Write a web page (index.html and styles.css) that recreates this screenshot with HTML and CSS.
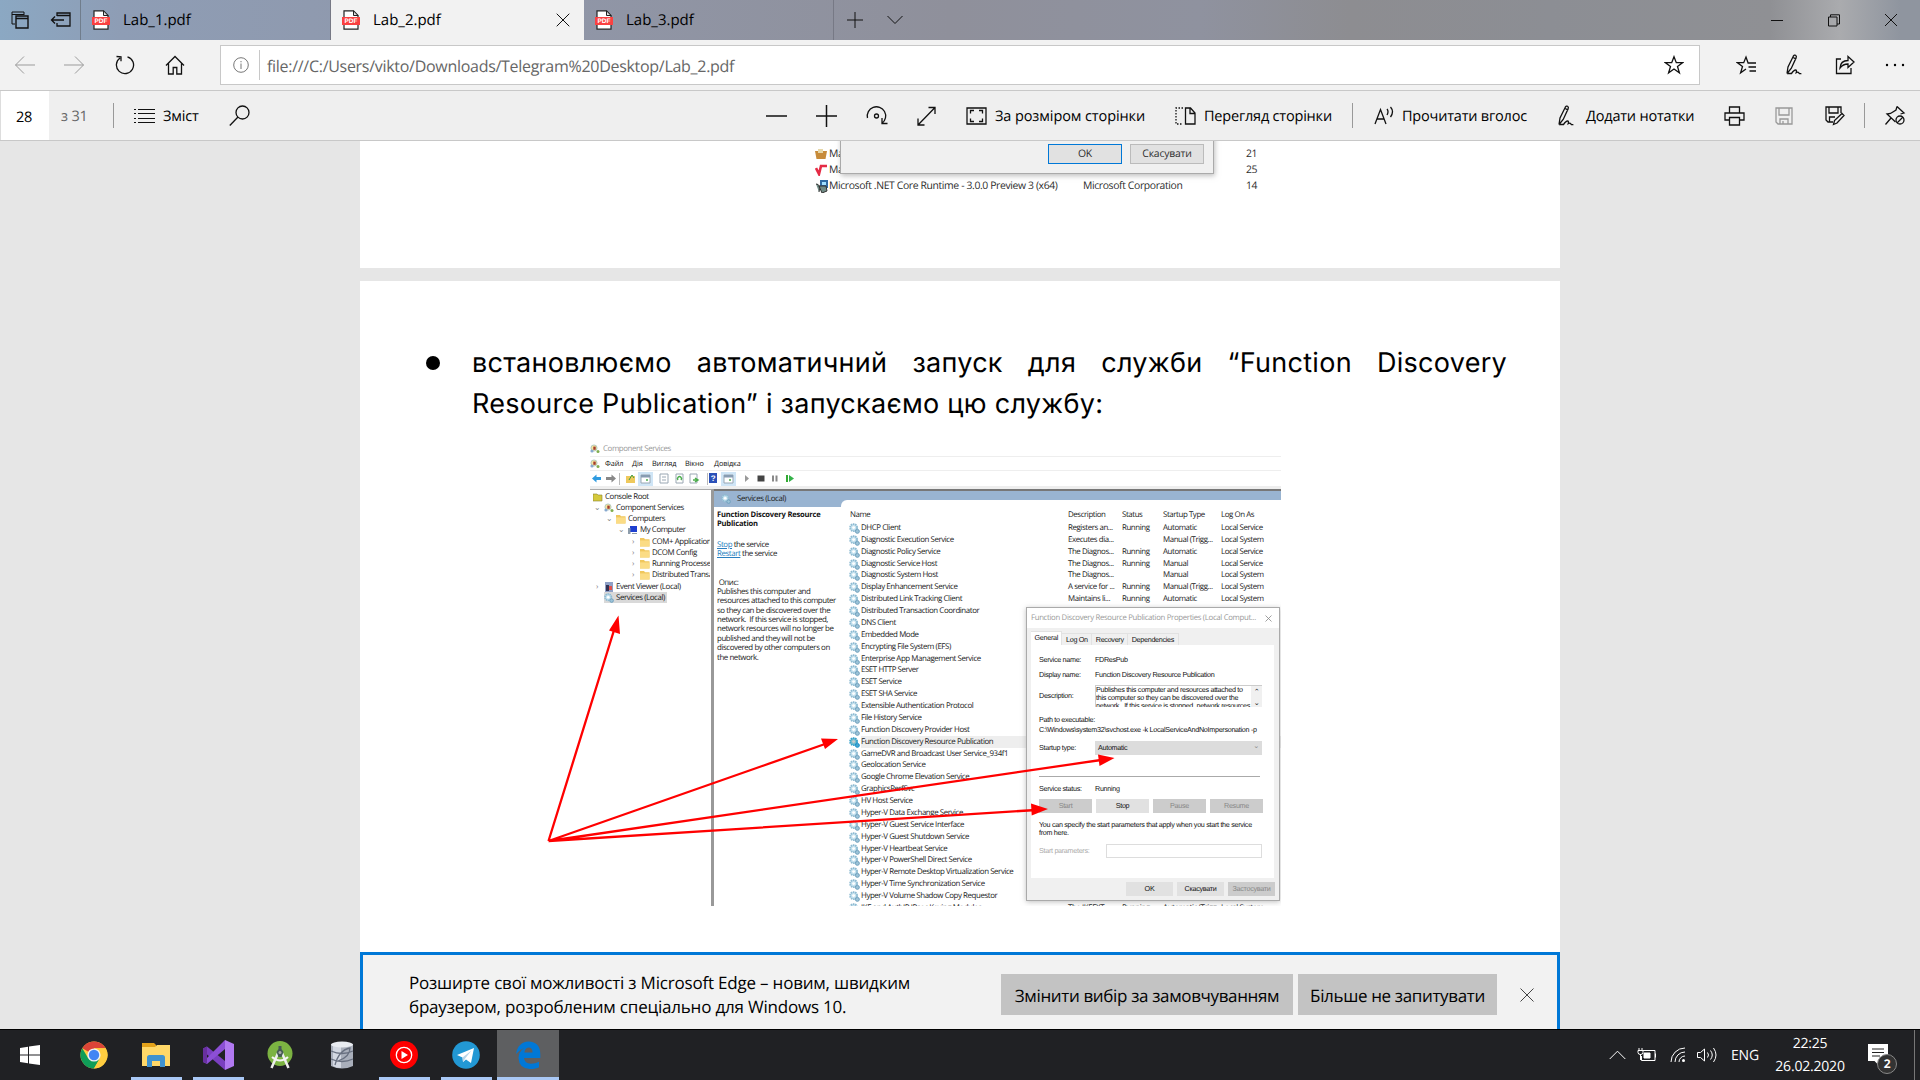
FILE: index.html
```html
<!DOCTYPE html>
<html lang="uk">
<head>
<meta charset="utf-8">
<title>Lab_2.pdf</title>
<link rel="stylesheet" href="styles.css">
</head>
<body>
<svg class="defs" aria-hidden="true">
  <symbol id="pdf" viewBox="0 0 18 20"><path d="M2 .8h9.5L16 5.5V19.2H2z" fill="#fff" stroke="#222" stroke-width="1.2"/><path d="M11.5.8v4.7H16z" fill="#ddd" stroke="#222"/><path d="M0 7h18v8H0z" fill="#fa4141"/><text x="9" y="13.2" text-anchor="middle" class="pdf-text">PDF</text></symbol>
  <symbol id="gear" viewBox="0 0 10 10"><circle cx="4.2" cy="4.2" r="3.2" fill="#c6e2ef" stroke="#8fbbd2" stroke-width="1.7" stroke-dasharray="1.4 .6"/><circle cx="7.6" cy="7.600" r="1.800" fill="#9cc3d8" stroke="#6d9fbc" stroke-width=".9"/><circle cx="4.2" cy="4.2" r="1.3" fill="#fff"/></symbol>
  <symbol id="folder" viewBox="0 0 10 10"><path d="M0 1h4l1 1.2h4.5V9.5H0z" fill="#f0c75d"/><path d="M0 3.4h9.5v6H0z" fill="#fbdc85"/></symbol>
  <symbol id="comp" viewBox="0 0 10 10"><circle cx="4" cy="4" r="3.1" fill="#f5e6a0" stroke="#9bb" stroke-width=".7"/><path d="M3.3 2.6h2.4v3.2H3.3z" fill="#a33c2e"/><circle cx="2" cy="7" r="1.6" fill="#88a9cf"/><circle cx="8" cy="7.5" r="1.5" fill="#7fae4e"/></symbol>
  <symbol id="pen" viewBox="0 0 20 22"><path d="M2 19.5 3 13 8.3 2.2q1-1.7 2.3-.9 1.3.9.5 2.6L6.2 14.5 2 19.5M8 3.5l3 1.4M2 19.5h4.5q2.5-3.5 4-3.5t.7 2.6q1.8-1 2.6.2t2.6.8"/></symbol>
  <symbol id="star" viewBox="0 0 20 20"><path d="m10 1.7 2.3 6h6.2l-5 3.8 1.9 6.3L10 14l-5.4 3.8 1.9-6.3-5-3.8h6.2z"/></symbol>
</svg>
<div class="window">
  <header class="tabs">
    <div class="tab-tools">
      <svg class="ic" width="20" height="20" viewBox="0 0 20 20"><path d="M5 14H2V2h12v3M2 4.5h12"/><path d="M6 6h12v12H6zM6 8.5h12" stroke-width="1.4"/></svg>
      <svg class="ic" width="22" height="18" viewBox="0 0 22 18"><path d="M7 5V2h13v13H7v-3M7 4.5h13" stroke-width="1.3"/><path d="M14 9H1.5M5 5.5 1.5 9 5 12.5" stroke-width="1.3"/></svg>
    </div>
    <div class="tab"><svg width="18" height="20"><use href="#pdf"/></svg><span>Lab_1.pdf</span></div>
    <div class="tab active"><svg width="18" height="20"><use href="#pdf"/></svg><span>Lab_2.pdf</span><svg class="ic tab-close" width="14" height="14"><path d="m.7.7 12.6 12.6M13.3.7.7 13.3"/></svg></div>
    <div class="tab"><svg width="18" height="20"><use href="#pdf"/></svg><span>Lab_3.pdf</span></div>
    <svg class="ic new-tab" width="16" height="16"><path d="M8 0v16M0 8h16"/></svg>
    <svg class="ic" width="16" height="10"><path d="m.5 1 7.5 7.500L15.500 1"/></svg>
    <div class="controls">
      <svg class="ic" width="12" height="12"><path d="M0 6.500h12"/></svg>
      <svg class="ic" width="12" height="13"><path d="M.5 3h8.500v9H.5zM2.500 3V.8h9V10H9"/></svg>
      <svg class="ic" width="12" height="12"><path d="m0 0 12 12M12 0 0 12"/></svg>
    </div>
  </header>

  <nav class="nav">
    <svg class="ic off" width="22" height="20"><path d="M21 10H1.500M10 1.500 1.500 10l8.500 8.500"/></svg>
    <svg class="ic off" width="22" height="20"><path d="M0 10h19.500M11 1.500l8.500 8.500-8.500 8.500"/></svg>
    <svg class="ic bold" width="20" height="20"><path d="M12.500 1.800A8.600 8.600 0 1 1 5 3M1.500 1.500 6 1.800v4.500"/></svg>
    <svg class="ic bold" width="20" height="20"><path d="m1 10.500 9-9 9 9M3.500 8.500V19h4.700v-6.500h3.600V19h4.700V8.500"/></svg>
    <div class="address">
      <svg class="ic info" width="16" height="16"><circle cx="8" cy="8" r="7.300"/><path d="M8 6.500V12M8 4v1.300"/></svg>
      <span class="url">file:///C:/Users/vikto/Downloads/Telegram%20Desktop/Lab_2.pdf</span>
      <svg class="ic bold" width="20" height="20"><use href="#star"/></svg>
    </div>
    <svg class="ic bold" width="20" height="20"><path d="M12 7.800 10 2 7.700 7.700H1.500l5 3.800-1.900 6.300L10 14M11.500 8H20M12.500 12H20M13.500 16H20"/></svg>
    <svg class="ic bold" width="20" height="22"><use href="#pen"/></svg>
    <svg class="ic bold" width="20" height="20"><path d="M6 4H1.500v14.500H16V13M5 13q.5-7.500 8-7.500V1.500L19 7l-6 5.500V9q-5 0-8 4z"/></svg>
    <svg width="20" height="20"><circle cx="2" cy="10" r="1.200"/><circle cx="10" cy="10" r="1.200"/><circle cx="18" cy="10" r="1.200"/></svg>
  </nav>

  <div class="toolbar">
    <span class="page-no">28</span>
    <span class="of">з 31</span>
    <i class="sep"></i>
    <svg class="ic" width="21" height="16"><path d="M4 1.500h17M4 5.500h17M4 10.500h17M4 14.500h17M0 1.500h2M0 5.500h2M0 10.500h2M0 14.500h2"/></svg>
    <span class="t-toc">Зміст</span>
    <svg class="ic bold" width="21" height="22"><circle cx="13.500" cy="7.500" r="6.500"/><path d="M9 12 .8 20.500"/></svg>
    <svg class="ic" width="21" height="22"><path d="M0 11h21" stroke-width="1.500"/></svg>
    <svg class="ic" width="21" height="22"><path d="M0 11h21M10.500 0v22" stroke-width="1.500"/></svg>
    <svg class="ic bold" width="22" height="22"><path d="M1.500 13A9.200 9.200 0 1 1 16 18.300M16 13v5.500h5.500"/><circle cx="10.500" cy="11" r="2"/></svg>
    <svg class="ic bold" width="19" height="22"><path d="M1 20 18 2.500M11.500 2.500H18V9M1 13.500V20h6.500"/></svg>
    <svg class="ic bold" width="21" height="18"><path d="M1 1h19v16H1zM4.500 6.500v-3H8M13 3.500h3.500v3M4.500 11.500v3H8M13 14.500h3.500v-3"/></svg>
    <span class="t-fit">За розміром сторінки</span>
    <svg class="ic bold" width="21" height="18"><path d="M10.500 1h5L20 6v11h-9.500zM15 1v5.500h5"/><path d="M8 1H1v16h7" stroke-dasharray="1.500 1.500"/></svg>
    <span class="t-view">Перегляд сторінки</span>
    <i class="sep"></i>
    <svg class="ic bold" width="21" height="20"><path d="M1 18 6.500 3.500 12 18M3 13h7M13 3q2 2.500 0 6M16.500 1q4 4.500 0 10"/></svg>
    <span class="t-read">Прочитати вголос</span>
    <svg class="ic bold" width="20" height="22"><use href="#pen"/></svg>
    <span class="t-note">Додати нотатки</span>
    <svg class="ic bold" width="21" height="20"><path d="M5.500 7V1h10v6M5 14H1V7h19v7h-4M5.500 11.500h10V19h-10z"/></svg>
    <svg class="ic bold gray" width="18" height="18"><path d="M1 1h16v16H3L1 15zM4 1v7h10V1M5 17v-5h8v5M8 14v3"/></svg>
    <svg class="ic bold" width="20" height="20"><path d="M8 16H3l-2-2V1h15v6M4 1v6h9V1M4.500 16v-5H10M8.500 18.500l1-4 7.500-7 2 2-7 7.500z"/></svg>
    <i class="sep"></i>
    <svg class="ic bold" width="21" height="21"><path d="m12 1.500 7 6.500-3.500 1M12 1.500 11 5 5.500 8.500 2 9l8.500 8M6 13l-5.500 6.500"/><circle cx="15" cy="15" r="4"/><path d="m12 18 6-6"/></svg>
  </div>

  <main class="viewer">
    <section class="sheet first">
      <div class="shot-a">
        <div class="prog-row"><svg width="12" height="12"><path d="M0 3h12l-1.500 8h-9z" fill="#c78b3a"/><path d="M3 1h5v4H3z" fill="#e6d7a8"/></svg><span>Ma</span><b></b><span>21</span></div>
        <div class="prog-row"><svg width="12" height="12"><path d="m1 4 3 6L6 2h6" fill="none" stroke="#e52b45" stroke-width="2.600"/></svg><span>Ma</span><b></b><span>25</span></div>
        <div class="prog-row"><svg width="13" height="13"><path d="M5 0h8v8H5z" fill="#2e6ba3"/><path d="M7 2h4v3H7z" fill="#9fe0ff"/><path d="M1 4q5 0 3 8M4 6h7l1 5-5 2z" fill="#6f8b85" stroke="#333"/></svg><span>Microsoft .NET Core Runtime - 3.0.0 Preview 3 (x64)</span><span>Microsoft Corporation</span><span>14</span></div>
        <div class="prog-row cut"><svg width="13" height="12"><path d="M5 1h8v8H5z" fill="#2e6ba3"/></svg></div>
        <div class="dlg-a"><span class="primary">OK</span><span>Скасувати</span></div>
      </div>
    </section>

    <section class="sheet second">
      <div class="bullet">
        <i class="dot"></i>
        <p><span class="just">встановлюємо автоматичний запуск для служби “Function Discovery</span><span class="last">Resource Publication” і запускаємо цю службу:</span></p>
      </div>
      <div class="shot-b">
        <div class="cs-title"><svg width="10" height="10"><use href="#comp"/></svg><span>Component Services</span></div>
        <div class="cs-menu"><svg width="10" height="10"><use href="#comp"/></svg><span>Файл</span><span>Дія</span><span>Вигляд</span><span>Вікно</span><span>Довідка</span></div>
        <div class="cs-tools">
          <svg width="210" height="15"><path d="M2 7.500 6.500 3.500V6H11v3H6.500v2.500z" fill="#2f9be0"/><path d="M26 7.500 21.500 3.500V6H16v3h5.500v2.500z" fill="#888"/><path d="M29.500 2v12M117.500 2v12" stroke="#bbb"/><path d="M48 1h15v14H48zM131 1h15v14h-15z" fill="#cfe5f6"/><path d="M36 5h9v7h-9z" fill="#efc95c"/><path d="m39 9 3-5 2 3" fill="none" stroke="#3f9c3f"/><path d="M51 4h9v8h-9zM134 4h9v8h-9zM70 3h8v9h-8zM86 3h7v9h-7zM100 3h7v9h-7z" fill="#fff" stroke="#9aa7b3"/><path d="M51 4h9v2.500h-9zM134 4h9v2.500h-9z" fill="#879cb2"/><path d="M56 9h2M139 9h2M88 9a2 2 0 1 1 3 0M103 9h5M105 7l3 2-3 2" fill="none" stroke="#4cae4c" stroke-width="1.500"/><path d="M72 6h4M72 9h4" stroke="#9aa7b3"/><path d="M119 2h8v10h-8z" fill="#2b50b8"/><text x="123" y="10" class="q">?</text><path d="m155 4 4 3.500-4 3.500z" fill="#999"/><path d="M167.500 4.500h7v6h-7z" fill="#444"/><path d="M183 4.500v6M186.500 4.500v6" stroke="#888" stroke-width="2"/><path d="M197 4v7" stroke="#3a3" stroke-width="2"/><path d="m199 4 5 3.500-5 3.500z" fill="#35b24a"/></svg>
        </div>
        <div class="cs-body">
          <div class="tree">
            <div class="node"><svg width="10" height="10"><path d="M0 2h4l1 1h4v6H0z" fill="#d5c93c" stroke="#8a8530" stroke-width=".6"/></svg><span>Console Root</span></div>
            <div class="node l1"><em>⌄</em><svg width="10" height="10"><use href="#comp"/></svg><span>Component Services</span></div>
            <div class="node l2"><em>⌄</em><svg width="10" height="10"><use href="#folder"/></svg><span>Computers</span></div>
            <div class="node l3"><em>⌄</em><svg width="10" height="10"><path d="M2 1h7v6H2z" fill="#1d3fd0"/><path d="M0 3h2.500v6H0zM4 8h5v1H4z" fill="#8d9cab"/></svg><span>My Computer</span></div>
            <div class="node l4"><em>›</em><svg width="10" height="10"><use href="#folder"/></svg><span>COM+ Applications</span></div>
            <div class="node l4"><em>›</em><svg width="10" height="10"><use href="#folder"/></svg><span>DCOM Config</span></div>
            <div class="node l4"><em>›</em><svg width="10" height="10"><use href="#folder"/></svg><span>Running Processes</span></div>
            <div class="node l4"><em>›</em><svg width="10" height="10"><use href="#folder"/></svg><span>Distributed Transaction</span></div>
            <div class="node l1"><em>›</em><svg width="10" height="10"><path d="M1 0h8v10H1z" fill="#8fa0c6"/><path d="M2 3h3v6H2z" fill="#335"/><path d="M5 4h3v4H5z" fill="#e0534d"/></svg><span>Event Viewer (Local)</span></div>
            <div class="node l1"><em></em><div class="sel"><svg width="10" height="10"><use href="#gear"/></svg><span>Services (Local)</span></div></div>
          </div>
          <div class="pane">
            <div class="pane-head"><svg width="10" height="10"><use href="#gear"/></svg><span>Services (Local)</span></div>
            <div class="detail">
              <strong>Function Discovery Resource<br>Publication</strong>
              <p class="links"><u>Stop</u> the service<br><u>Restart</u> the service</p>
              <p class="desc">&nbsp;Опис:<br>Publishes this computer and<br>resources attached to this computer<br>so they can be discovered over the<br>network.&nbsp; If this service is stopped,<br>network resources will no longer be<br>published and they will not be<br>discovered by other computers on<br>the network.</p>
            </div>
            <div class="list">
              <div class="row head"><span>Name</span><span>Description</span><span>Status</span><span>Startup Type</span><span>Log On As</span></div>
              <div class="row"><svg><use href="#gear"/></svg><span>DHCP Client</span><span>Registers an...</span><span>Running</span><span>Automatic</span><span>Local Service</span></div>
              <div class="row"><svg><use href="#gear"/></svg><span>Diagnostic Execution Service</span><span>Executes dia...</span><span></span><span>Manual (Trigg...</span><span>Local System</span></div>
              <div class="row"><svg><use href="#gear"/></svg><span>Diagnostic Policy Service</span><span>The Diagnos...</span><span>Running</span><span>Automatic</span><span>Local Service</span></div>
              <div class="row"><svg><use href="#gear"/></svg><span>Diagnostic Service Host</span><span>The Diagnos...</span><span>Running</span><span>Manual</span><span>Local Service</span></div>
              <div class="row"><svg><use href="#gear"/></svg><span>Diagnostic System Host</span><span>The Diagnos...</span><span></span><span>Manual</span><span>Local System</span></div>
              <div class="row"><svg><use href="#gear"/></svg><span>Display Enhancement Service</span><span>A service for ...</span><span>Running</span><span>Manual (Trigg...</span><span>Local System</span></div>
              <div class="row"><svg><use href="#gear"/></svg><span>Distributed Link Tracking Client</span><span>Maintains li...</span><span>Running</span><span>Automatic</span><span>Local System</span></div>
              <div class="row"><svg><use href="#gear"/></svg><span>Distributed Transaction Coordinator</span><span>Coordinates ...</span><span>Running</span><span>Manual</span><span>Network S...</span></div>
              <div class="row"><svg><use href="#gear"/></svg><span>DNS Client</span></div>
              <div class="row"><svg><use href="#gear"/></svg><span>Embedded Mode</span></div>
              <div class="row"><svg><use href="#gear"/></svg><span>Encrypting File System (EFS)</span></div>
              <div class="row"><svg><use href="#gear"/></svg><span>Enterprise App Management Service</span></div>
              <div class="row"><svg><use href="#gear"/></svg><span>ESET HTTP Server</span></div>
              <div class="row"><svg><use href="#gear"/></svg><span>ESET Service</span></div>
              <div class="row"><svg><use href="#gear"/></svg><span>ESET SHA Service</span></div>
              <div class="row"><svg><use href="#gear"/></svg><span>Extensible Authentication Protocol</span></div>
              <div class="row"><svg><use href="#gear"/></svg><span>File History Service</span></div>
              <div class="row"><svg><use href="#gear"/></svg><span>Function Discovery Provider Host</span></div>
              <div class="row picked"><svg><use href="#gear"/></svg><span>Function Discovery Resource Publication</span></div>
              <div class="row"><svg><use href="#gear"/></svg><span>GameDVR and Broadcast User Service_934f1</span></div>
              <div class="row"><svg><use href="#gear"/></svg><span>Geolocation Service</span></div>
              <div class="row"><svg><use href="#gear"/></svg><span>Google Chrome Elevation Service</span></div>
              <div class="row"><svg><use href="#gear"/></svg><span>GraphicsPerfSvc</span></div>
              <div class="row"><svg><use href="#gear"/></svg><span>HV Host Service</span></div>
              <div class="row"><svg><use href="#gear"/></svg><span>Hyper-V Data Exchange Service</span></div>
              <div class="row"><svg><use href="#gear"/></svg><span>Hyper-V Guest Service Interface</span></div>
              <div class="row"><svg><use href="#gear"/></svg><span>Hyper-V Guest Shutdown Service</span></div>
              <div class="row"><svg><use href="#gear"/></svg><span>Hyper-V Heartbeat Service</span></div>
              <div class="row"><svg><use href="#gear"/></svg><span>Hyper-V PowerShell Direct Service</span></div>
              <div class="row"><svg><use href="#gear"/></svg><span>Hyper-V Remote Desktop Virtualization Service</span></div>
              <div class="row"><svg><use href="#gear"/></svg><span>Hyper-V Time Synchronization Service</span></div>
              <div class="row"><svg><use href="#gear"/></svg><span>Hyper-V Volume Shadow Copy Requestor</span></div>
              <div class="row"><svg><use href="#gear"/></svg><span>IKE and AuthIP IPsec Keying Modules</span><span>The IKEEXT ...</span><span>Running</span><span>Automatic (Trigg...</span><span>Local System</span></div>
            </div>
          </div>
        </div>
        <div class="props">
          <div class="props-title"><span>Function Discovery Resource Publication Properties (Local Comput...</span><svg width="7" height="7"><path d="m.5.5 6 6M6.500.5l-6 6" stroke="#888" stroke-width=".8"/></svg></div>
          <div class="props-tabs"><span class="on">General</span><span>Log On</span><span>Recovery</span><span>Dependencies</span></div>
          <div class="props-panel">
            <div class="f f1"><label>Service name:</label><span>FDResPub</span></div>
            <div class="f f2"><label>Display name:</label><span>Function Discovery Resource Publication</span></div>
            <div class="f f3"><label>Description:</label><div class="area"><span>Publishes this computer and resources attached to<br>this computer so they can be discovered over the<br>network.&nbsp; If this service is stopped, network resources</span><em>⌃<br>⌄</em></div></div>
            <div class="path">Path to executable:<br>C:\Windows\system32\svchost.exe -k LocalServiceAndNoImpersonation -p</div>
            <div class="f f4"><label>Startup type:</label><div class="combo"><span>Automatic</span><em>⌄</em></div></div>
            <div class="f f5"><label>Service status:</label><span>Running</span></div>
            <div class="acts"><span>Start</span><span class="en">Stop</span><span>Pause</span><span>Resume</span></div>
            <div class="hint">You can specify the start parameters that apply when you start the service<br>from here.</div>
            <div class="params"><label>Start parameters:</label><i></i></div>
          </div>
          <div class="props-foot"><span>OK</span><span>Скасувати</span><span class="dis">Застосувати</span></div>
        </div>
      </div>
      <svg class="arrows" width="700" height="260" viewBox="540 600 700 260">
        <path d="M548.500 841 615 627M548.500 841 825 744M548.500 841 1101 760M548.500 841 1036 810" stroke="#f00" stroke-width="2.300" fill="none"/>
        <path d="M618.500 615.500 609 630.500l11 3.500zM838 739l-17-.5 4 10.500zM1114.500 758l-16.500-3.500 1.500 11.500zM1048 809l-17-5.500.7 12z" fill="#f00"/>
      </svg>
    </section>

    <aside class="banner">
      <p>Розширте свої можливості з Microsoft Edge – новим, швидким<br>браузером, розробленим спеціально для Windows 10.</p>
      <span class="btn b1">Змінити вибір за замовчуванням</span>
      <span class="btn b2">Більше не запитувати</span>
      <svg class="ic" width="14" height="14"><path d="m.5.5 13 13M13.500.5l-13 13" stroke="#444"/></svg>
    </aside>
  </main>

  <footer class="taskbar">
    <div class="app"><svg width="20" height="20"><path d="M0 3 8 1.700V9.500H0zM9 1.500 20 0v9.500H9zM0 10.500h8v7.800L0 17zM9 10.500h11V20L9 18.500z" fill="#fff"/></svg></div>
    <div class="app"><svg width="28" height="28" viewBox="0 0 28 28"><circle cx="14" cy="14" r="13.500" fill="#ffcd40"/><path d="M14 14 2.300 7.250A13.500 13.500 0 0 1 25.700 7.250H14z" fill="#db4437"/><path d="M2.300 7.250A13.500 13.500 0 0 0 14 27.500L19.800 17.500 14 14 8.200 17.300z" fill="#0f9d58"/><path d="M14 7.250h11.700A13.500 13.500 0 0 1 14 27.500L19.850 17.400z" fill="#ffcd40"/><circle cx="14" cy="14" r="6.600" fill="#f1f1f1"/><circle cx="14" cy="14" r="5.200" fill="#4285f4"/></svg></div>
    <div class="app run"><svg width="28" height="28" viewBox="0 0 28 28"><path d="M0 2h12l2 2v3H0z" fill="#e3a21a"/><path d="M0 6h13l2-2h13v21H0z" fill="#ffd868"/><path d="M5 26V16.500q0-2.500 2.500-2.500h13q2.500 0 2.500 2.500V26h-5v-6h-8v6z" fill="#3f92cf"/></svg></div>
    <div class="app run"><svg width="31" height="30" viewBox="0 0 31 30"><path d="M22 0 31 4v22l-9 4z" fill="#b179f1"/><path d="M0 8.500 4 6.500 22 21v9L0 11z" fill="#7a3fc0"/><path d="M22 0v9L4 24 0 22z" fill="#8c4fd6"/><path d="M0 8.500 4 6.500v17L0 22z" fill="#68309f"/></svg></div>
    <div class="app"><svg width="26" height="28" viewBox="0 0 26 28"><circle cx="13" cy="12.500" r="12.500" fill="#7cb342"/><path d="M11.500 11 4.500 27M14.500 11l7 16" stroke="#eee" stroke-width="2.500"/><path d="M5 16q8 7 16 0" fill="none" stroke="#f5f5f5" stroke-width="2"/><path d="M11.500 5h3v3l2 3-2 5h-3l-2-5 2-3z" fill="#455a55"/><circle cx="13" cy="11.500" r="1.500" fill="#aaa"/></svg></div>
    <div class="app"><svg width="24" height="28" viewBox="0 0 24 28"><path d="M1 3v22q11 5 22 0V3" fill="#a9afbb"/><path d="M3 3v22q3 2 8 2V4z" fill="#d3d8e2"/><ellipse cx="12" cy="3.500" rx="11" ry="3" fill="#e9ecf1"/><path d="M1 10q11 5 22 0M1 18q11 5 22 0M5 24Q9 9 20 7q0 9-12 13" fill="none" stroke="#687080" stroke-width="1.300"/></svg></div>
    <div class="app run"><svg width="28" height="28"><circle cx="14" cy="14" r="14" fill="#f00"/><circle cx="14" cy="14" r="7.700" fill="none" stroke="#fff" stroke-width="1.300"/><path d="m11.500 10 6.500 4-6.500 4z" fill="#fff"/></svg></div>
    <div class="app run"><svg width="28" height="28"><circle cx="14" cy="14" r="13.800" fill="#2298d4"/><path d="m5 14 17-7-3 15-5-3.500-3 2.500-.5-4.500z" fill="#fff"/><path d="m10.500 16.500 9-7-6 7.500-2.500 4z" fill="#b8d5e8"/></svg></div>
    <div class="app run current"><svg width="26" height="28" viewBox="0 0 26 28"><path d="M1 13Q3 1 13.500 0.500 25 .8 25.300 13v4H9q.4 5.500 7 5.700 4.500 0 8-2v5.500Q21 28 15 28 4 27.500 3.500 17 3.600 11 9 7 4.500 8.500 1 13M9.300 11.500h8.200Q17.500 6.500 13.500 6.500q-3.500.3-4.200 5z" fill="#0078d7" fill-rule="evenodd"/></svg></div>
    <div class="tray">
      <svg class="ic w" width="17" height="10"><path d="m.7 9 7.800-7.800L16.300 9"/></svg>
      <svg class="ic w" width="20" height="14"><path d="M6 2.500h12v10H4.500V8M18.500 5.500v4"/><path d="M7 5h6v5H7z" fill="#fff"/><path d="M1 2.500h5v2q0 2-2.500 2T1 4.500zM2 0v2M5 0v2M3.500 6v6"/></svg>
      <svg class="ic w" width="16" height="16"><path d="M1 15A14 14 0 0 1 15 1M5 15A10 10 0 0 1 15 5M9 15a6 6 0 0 1 6-6"/><circle cx="13.500" cy="13.500" r="1.500" fill="#fff" stroke="none"/></svg>
      <svg class="ic w" width="21" height="16"><path d="M.5 5.500h3L7.500 2v12l-4-3.500h-3zM10.500 5.500q2 2.500 0 5M13.500 3.500q3.500 4.500 0 9M16.500 1q5 7 0 14"/></svg>
      <span class="lang">ENG</span>
      <span class="clock">22:25<br>26.02.2020</span>
      <div class="notif"><svg width="20" height="22"><path d="M0 0h20v17h-9v4.500L6.500 17H0z" fill="#fff"/><path d="M4 5h12M4 8.500h12M4 12h8" stroke="#222"/></svg><b>2</b></div>
      <i class="peek"></i>
    </div>
  </footer>
</div>
</body>
</html>
```

FILE: styles.css
```css
* { box-sizing: border-box; }
body { margin: 0; font-family: "Open Sans", "Noto Sans", sans-serif; color: #000; background: #e6e6e6; overflow: hidden; text-rendering: geometricPrecision; }
p { margin: 0; }
svg { display: block; flex: none; }
i, em { font-style: normal; }
.defs { position: absolute; width: 0; height: 0; }
.ic { fill: none; stroke: #111; stroke-width: 1; }
.bold { stroke-width: 1.3; }
.off { stroke: #9b9b9b; }
.gray { stroke: #999; }
.w { stroke: #fff; }
.pdf-text { font: bold 6.5px "Liberation Sans", sans-serif; fill: #fff; }
.window { width: 1920px; height: 1080px; display: grid; grid-template-rows: 40px 51px 50px 889px 50px; }

.tabs { display: flex; align-items: center; background: linear-gradient(90deg, #8ba8c3 0, #8e9db5 120px, #9097a9 500px, #8f909b 950px, #8f929f 1200px, #8d8d91 1350px, #8c8e94 1550px, #8f9094 1770px, #aaabae 1840px, #8f959f 1900px); }
.tab-tools { width: 81px; height: 40px; display: flex; align-items: center; padding-left: 10px; gap: 20px; border-right: 1px solid #707d8c; }
.tab { width: 250px; height: 40px; display: flex; align-items: center; padding-left: 11px; gap: 13px; border-right: 1px solid #777985; font-size: 15px; letter-spacing: 0; }
.tab.active { width: 253px; background: #f2f2f2; border: 0; }
.tab-close { margin-left: auto; margin-right: 14px; }
.new-tab { margin: 0 24px 0 13px; }
.controls { display: flex; align-items: center; gap: 45px; margin-left: auto; padding-right: 23px; }

.nav { display: grid; grid-template-columns: 50px 51px 50px 55px 1516px 49px 50px 50px 1fr; align-items: center; padding: 0 0 1px 14px; background: #f2f2f2; border-bottom: 1px solid #c8c8c8; }
.address { width: 1480px; height: 40px; background: #fff; border: 1px solid #c8c8c8; display: flex; align-items: center; padding: 0 15px 0 12px; }
.info { stroke: #777; }
.url { flex: 1; height: 30px; margin-left: 10px; padding-left: 7px; border-left: 1px solid #c8c8c8; font-size: 16px; line-height: 32px; color: #666; letter-spacing: -.29px; }

.toolbar { display: grid; align-items: center; grid-template-columns: 61px 52px 21px 29px 66px 537px 50px 50px 51px 49px 29px 180px 29px 148px 22px 28px 155px 29px 138px 51px 50px 39px 21px 1fr; background: #efefef; border-bottom: 1px solid #c8c8c8; font-size: 14.5px; letter-spacing: -.2px; white-space: nowrap; }
.page-no { width: 49px; height: 49px; background: #fff; text-align: center; line-height: 54px; padding-right: 2px; border-left: 1px solid #ddd; }
.of, .t-toc, .t-fit, .t-view, .t-read, .t-note { padding-top: 2px; }
.of { color: #666; }
.sep { width: 1px; height: 25px; background: #999; }
.t-fit { letter-spacing: -.1px; }

.viewer { position: relative; overflow: hidden; background: #e6e6e6; border-bottom: 1px solid #000; display: flex; flex-direction: column; align-items: center; gap: 13px; }
.sheet { width: 1200px; background: #fff; flex: none; }
.first { height: 127px; }
.second { height: 900px; position: relative; }

.shot-a { position: relative; width: 447px; height: 57px; margin-left: 455px; overflow: hidden; font-size: 10.400px; letter-spacing: -.37px; color: #2c2c2c; padding-top: 5px; }
.prog-row { display: grid; grid-template-columns: 14px 254px 163px 1fr; align-items: center; height: 16.2px; white-space: nowrap; }
.dlg-a { position: absolute; left: 25px; top: -10px; width: 374px; height: 43px; background: #f0f0f0; border: 1px solid #aaa; box-shadow: 1px 2px 5px #8888; display: flex; justify-content: flex-end; align-items: flex-end; gap: 8px; padding: 0 9px 9px; }
.dlg-a span { width: 74px; height: 20px; background: #e1e1e1; border: 1px solid #bbb; text-align: center; line-height: 19px; letter-spacing: -.2px; }
.dlg-a .primary { border: 1.5px solid #0078d7; }

.bullet { display: flex; padding: 61px 0 0 66px; }
.dot { width: 14px; height: 14px; border-radius: 50%; background: #000; margin: 14px 32px 0 0; }
.bullet p { width: 1035px; font: 400 27px/41px "Inter", "Roboto", sans-serif; letter-spacing: .28px; }
.just, .last { display: block; white-space: nowrap; }
.just { text-align-last: justify; }

.shot-b { position: relative; width: 691px; height: 467px; margin: 15px 0 0 230px; overflow: hidden; font-size: 7.900px; letter-spacing: -.42px; color: #222; white-space: nowrap; }
.cs-title, .cs-menu { display: flex; align-items: center; border-bottom: 1px solid #eee; }
.cs-title { height: 18px; gap: 3px; color: #999; padding-top: 3px; }
.cs-menu { display: grid; grid-template-columns: 15px 27px 20px 33px 29px 1fr; height: 14px; padding-top: 1px; font-size: 7.300px; letter-spacing: -.1px; color: #111; }
.cs-tools { height: 19px; border-bottom: 4px solid #eee; }
.q { font: bold 8px "Liberation Sans", sans-serif; fill: #fff; text-anchor: middle; }
.cs-body { display: flex; height: 417px; margin-top: -1px; }
.tree { width: 124px; border-right: 3px solid #999; border-top: 1px solid #aaa; overflow: hidden; padding-top: 1px; }
.node { display: flex; align-items: center; height: 11.250px; padding-left: 3px; gap: 2px; width: 120px; overflow: hidden; }
.node em { flex: none; width: 10px; text-align: center; line-height: 8px; color: #888; }
.l1 { padding-left: 2px; } .l2 { padding-left: 14px; } .l3 { padding-left: 26px; } .l4 { padding-left: 38px; }
.sel { display: flex; align-items: center; gap: 2px; background: #d9d9d9; padding-right: 2px; height: 11px; }
.pane { flex: 1; display: grid; grid-template-columns: 127px 1fr; grid-template-rows: 16px 1fr; border-top: 2px solid #777; background: #fff; }
.pane-head { grid-column: 1 / 3; background: #99b4d1; display: flex; align-items: center; padding-left: 7px; gap: 6px; }
.detail { padding: 4px 0 0 3px; line-height: 9.370px; }
.detail strong { display: block; font-size: 7.600px; letter-spacing: -.2px; color: #111; }
.links { margin-top: 11px; } .links u { color: #2a7fc0; }
.desc { margin-top: 19px; }
.list { background: #fff; border-top-left-radius: 6px; margin-top: -7px; padding: 9px 0 0 8px; }
.row { display: grid; grid-template-columns: 12px 207px 54px 41px 58px 1fr; height: 11.877px; align-items: center; line-height: 11px; }
.row svg { width: 11px; height: 11px; }
.row.head { height: 13.500px; grid-template-columns: 218px 54px 41px 58px 1fr; padding-left: 1px; }
.picked { background: linear-gradient(#eee, #eee) 12px 0 no-repeat; } .picked svg { filter: saturate(3) brightness(.8); }

.props { position: absolute; left: 436px; top: 168px; width: 254px; height: 294px; background: #f0f0f0; border: 1px solid #aaa; box-shadow: 0 1px 5px #8888; font: 7.200px/8px "Liberation Sans", sans-serif; letter-spacing: -.3px; color: #111; }
.props-title { height: 20px; display: flex; align-items: center; justify-content: space-between; padding: 0 7px 0 4px; background: #fff; color: #999; font: 7.800px "Open Sans", sans-serif; letter-spacing: -.33px; }
.props-tabs { height: 17px; display: flex; align-items: flex-end; padding-left: 4px; }
.props-tabs span { height: 12px; line-height: 12px; padding: 0 3.5px; border: 1px solid #e2e2e2; border-width: 1px 1px 0 0; }
.props-tabs .on { background: #fff; height: 14px; }
.props-panel { height: 233px; margin: 0 5px 0 4px; background: #fff; padding: 10px 0 0 8px; }
.f { display: grid; grid-template-columns: 56px 1fr; align-items: center; height: 10px; }
.f2 { margin-top: 5px; }
.f3 { height: 22px; margin-top: 5px; }
.area { width: 167px; height: 22px; overflow: hidden; display: flex; justify-content: space-between; border: 1px solid #ccc; border-width: 1px 0 0 1px; }
.area em { width: 11px; text-align: center; background: #f0f0f0; line-height: 11px; }
.path { margin-top: 8px; line-height: 10px; }
.f4 { height: 14px; margin-top: 6px; }
.combo { width: 167px; height: 14px; background: #dcdcdc; display: flex; justify-content: space-between; padding: 3px 3px 0; }
.combo em { line-height: 4px; color: #888; }
.f5 { margin-top: 21px; width: 221px; border-top: 1px solid #aaa; padding-top: 5px; height: 19px; }
.acts { display: grid; grid-template-columns: repeat(4, 53px); gap: 4px; margin-top: 4px; }
.acts span, .props-foot span { height: 14px; line-height: 14px; text-align: center; background: #ccc; color: #888; }
.acts .en { background: #e1e1e1; color: #111; }
.hint { margin-top: 8px; }
.params { display: flex; justify-content: space-between; align-items: center; width: 223px; margin-top: 7px; color: #aaa; }
.params i { width: 156px; height: 14px; border: 1px solid #ddd; }
.props-foot { display: flex; justify-content: flex-end; gap: 4px; padding: 4px 4px 0; }
.props-foot span { width: 47px; background: #e1e1e1; color: #111; } .props-foot .dis { background: #ccc; color: #888; }
.arrows { position: absolute; left: 180px; top: 319px; }

.banner { position: absolute; left: 360px; bottom: 0; width: 1200px; height: 77px; background: #f2f2f2; border: 3px solid #0078d7; border-bottom: 0; display: flex; align-items: center; font-size: 17px; letter-spacing: -.2px; line-height: 24px; padding: 5px 0 0 46px; white-space: nowrap; }
.banner p { width: 592px; }
.btn { height: 41px; line-height: 43px; background: #c3c3c3; text-align: center; letter-spacing: -.35px; }
.b1 { width: 292px; margin-right: 5px; } .b2 { width: 199px; margin-right: 23px; }

.taskbar { background: #202124; display: flex; color: #fff; }
.app { width: 62px; height: 50px; display: flex; align-items: center; justify-content: center; }
.app:first-child { width: 60px; margin-right: 3px; }
.run { background: linear-gradient(#a9c8f5, #a9c8f5) 6px 47px / 51px 3px no-repeat; }
.current { background: linear-gradient(#a9c8f5, #a9c8f5) 0 47px / 62px 3px no-repeat #5e5f61; }
.tray { margin-left: auto; display: grid; grid-template-columns: 28px 33px 27px 34px 38px 93px 52px 6px; align-items: center; font-size: 14px; letter-spacing: -.2px; line-height: 23px; }
.clock { text-align: center; width: 82px; }
.notif { position: relative; margin-left: 6px; }
.notif b { position: absolute; left: 9px; top: 10px; width: 20px; height: 20px; border-radius: 50%; border: 1px solid #888; background: #333; font-size: 12px; line-height: 18px; text-align: center; }
.peek { width: 1px; height: 50px; background: #777; }
```
